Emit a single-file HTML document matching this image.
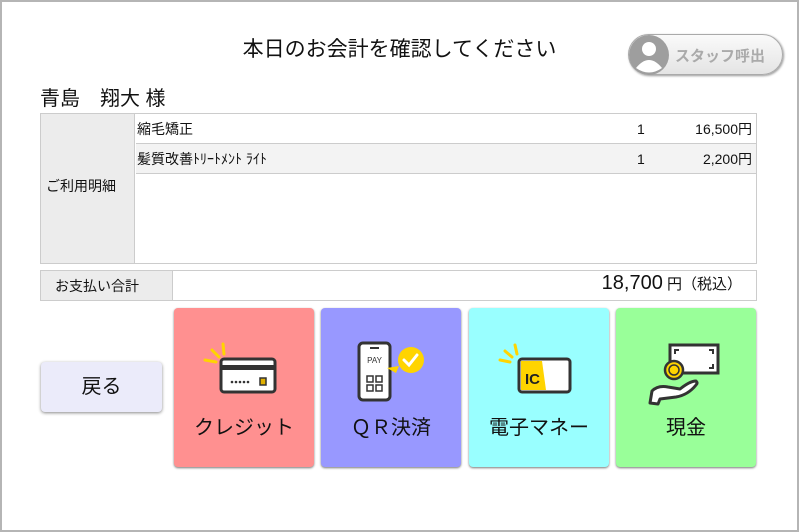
<!DOCTYPE html><html><head><meta charset="utf-8"><style>
*{box-sizing:border-box;margin:0;padding:0}
body{width:799px;height:532px;background:#fff;font-family:"Liberation Sans","Noto Sans CJK JP",sans-serif;color:#111;position:relative;overflow:hidden}
.frame{position:absolute;left:0;top:0;width:799px;height:532px;border:2px solid #b5b5b5}
.a{position:absolute}
.title{left:0;width:799px;top:33px;text-align:center;font-size:21px}
.staff{left:628px;top:34px;width:155px;height:41px;border:1px solid #aaa;border-radius:21px;background:linear-gradient(#fafafa,#e4e4e4);box-shadow:1px 1px 2px #999}
.staff span{position:absolute;left:46px;top:10px;font-size:15px;color:#aaa;font-weight:bold}
.name{left:40px;top:82px;font-size:20px}
.tbl{left:40px;top:113px;width:717px;height:151px;border:1px solid #ccc}
.lab{background:#ececec;border-right:1px solid #ccc}
.row{left:95px;width:620px;height:30px;border-bottom:1px solid #ccc;font-size:14px;line-height:30px}
.pay{left:40px;top:270px;width:717px;height:31px;border:1px solid #ccc}
.btn{top:308px;width:140px;height:159px;border-radius:4px;box-shadow:0 1px 2px #777;text-align:center}
.btn .t{position:absolute;left:0;width:100%;top:103px;font-size:20px}
.back{left:41px;top:362px;width:121px;height:50px;background:#ebebfa;border-radius:4px;box-shadow:0 1px 3px #888;font-size:20px;text-align:center;line-height:50px}
</style></head><body>
<div class="frame"></div>
<div class="a title">本日のお会計を確認してください</div>
<div class="a staff"><svg class="a" style="left:0;top:0" width="42" height="41" viewBox="0 0 42 41"><circle cx="20" cy="20" r="20" fill="#9e9e9e"/><circle cx="20" cy="14" r="7" fill="#fff"/><path d="M7 33 Q20 17 33 33 Q20 42 7 33Z" fill="#fff"/></svg><span>スタッフ呼出</span></div>
<div class="a name">青島　翔大 様</div>
<div class="a tbl">
<div class="a lab" style="left:0;top:0;width:94px;height:149px"></div>
<div class="a" style="left:5px;top:62px;font-size:14px">ご利用明細</div>
<div class="a row" style="top:0;background:#fff"><span class="a" style="left:1px">縮毛矯正</span><span class="a" style="left:501px">1</span><span class="a" style="right:4px">16,500円</span></div>
<div class="a row" style="top:30px;background:#f3f3f3"><span class="a" style="left:1px">髪質改善ﾄﾘｰﾄﾒﾝﾄ ﾗｲﾄ</span><span class="a" style="left:501px">1</span><span class="a" style="right:4px">2,200円</span></div>
</div>
<div class="a pay"><div class="a lab" style="left:0;top:0;width:132px;height:29px"></div>
<div class="a" style="left:14px;top:5px;font-size:14px">お支払い合計</div>
<div class="a" style="right:14px;top:1px;font-size:20px">18,700<span style="font-size:15px"> 円（税込）</span></div></div>
<div class="a back">戻る</div>
<div class="a btn" style="left:174px;background:#ff9090">
<svg class="a" style="left:28px;top:30px" width="80" height="60" viewBox="0 0 80 60"><g stroke="#ffd400" stroke-width="3" stroke-linecap="round"><path d="M3 22 L14 24"/><path d="M10 12 L17 19"/><path d="M21 6 L22 16"/></g><rect x="19" y="21" width="54" height="33" rx="3" fill="#fff" stroke="#333" stroke-width="3"/><rect x="20" y="27" width="52" height="5" fill="#333"/><g fill="#333"><circle cx="30" cy="44" r="1.3"/><circle cx="34" cy="44" r="1.3"/><circle cx="38" cy="44" r="1.3"/><circle cx="42" cy="44" r="1.3"/><circle cx="46" cy="44" r="1.3"/></g><rect x="58" y="40" width="6" height="7" fill="#e0b000" stroke="#333" stroke-width="1.5"/></svg>
<div class="t">クレジット</div></div>
<div class="a btn" style="left:321px;background:#9898ff">
<svg class="a" style="left:30px;top:32px" width="80" height="70" viewBox="0 0 80 70"><rect x="8" y="3" width="31" height="57" rx="4" fill="#fff" stroke="#333" stroke-width="3"/><rect x="19" y="7" width="9" height="2" fill="#333"/><text x="23.5" y="23" font-size="8" font-family="Liberation Sans" text-anchor="middle" fill="#333">PAY</text><g fill="none" stroke="#333" stroke-width="1.5"><rect x="16" y="36" width="6" height="6"/><rect x="25" y="36" width="6" height="6"/><rect x="16" y="45" width="6" height="6"/><rect x="25" y="45" width="6" height="6"/></g><circle cx="60" cy="20" r="13" fill="#ffd400"/><path d="M36 28 L48 26 L45 33Z" fill="#ffd400"/><path d="M53 20 L58 25 L66 15" stroke="#fff" stroke-width="3" fill="none" stroke-linecap="round"/></svg>
<div class="t">ＱＲ決済</div></div>
<div class="a btn" style="left:469px;background:#99ffff">
<svg class="a" style="left:27px;top:32px" width="80" height="60" viewBox="0 0 80 60"><g stroke="#ffd400" stroke-width="3" stroke-linecap="round"><path d="M4 20 L14 22"/><path d="M9 11 L16 17"/><path d="M19 5 L21 14"/></g><rect x="23" y="19" width="51" height="33" rx="3" fill="#fff" stroke="#333" stroke-width="3"/><path d="M25 21 L46 21 L50 50 L25 50Z" fill="#ffd400"/><text x="29" y="44" font-size="15" font-weight="bold" font-family="Liberation Sans" fill="#222">IC</text></svg>
<div class="t">電子マネー</div></div>
<div class="a btn" style="left:616px;background:#99ff99">
<svg class="a" style="left:30px;top:33px" width="80" height="70" viewBox="0 0 80 70"><rect x="24" y="4" width="48" height="28" fill="#fff" stroke="#333" stroke-width="3"/><g stroke="#333" stroke-width="2" fill="none"><path d="M29 13 V9 H33"/><path d="M63 9 H67 V13"/><path d="M29 23 V27 H33"/><path d="M63 27 H67 V23"/></g><circle cx="28" cy="29" r="9" fill="#ffd400" stroke="#333" stroke-width="2.5"/><circle cx="28" cy="29" r="5" fill="none" stroke="#333" stroke-width="1.5"/><path d="M4 62 L6 50 Q12 44 22 46 L34 48 Q44 40 50 40 Q52 42 50 44 Q42 54 30 56 L14 58 L12 63Z" fill="#fff" stroke="#333" stroke-width="3" stroke-linejoin="round"/></svg>
<div class="t">現金</div></div>
</body></html>
